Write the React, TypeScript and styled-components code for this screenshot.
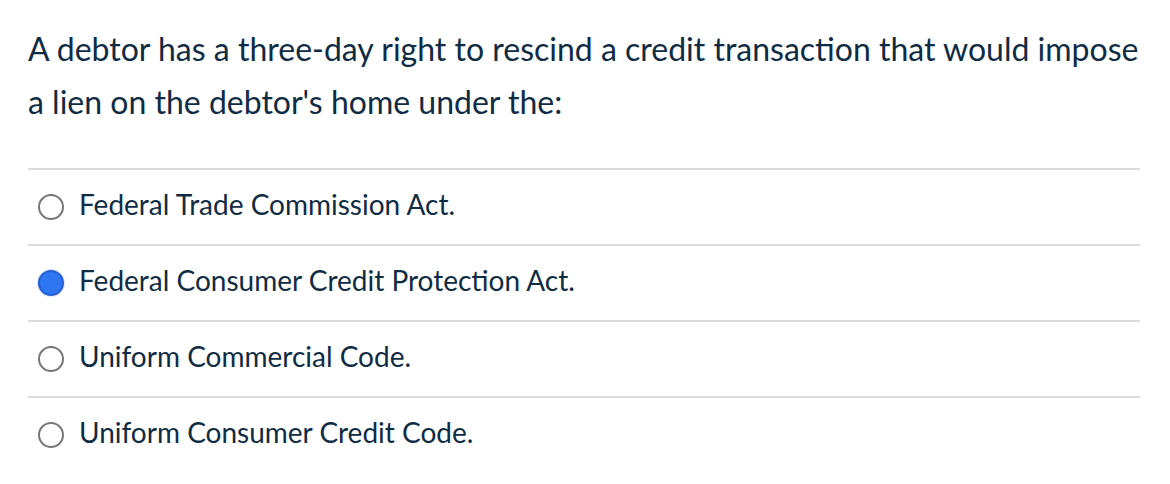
import styled, { createGlobalStyle } from "styled-components";

const GlobalStyle = createGlobalStyle`
  body {
    margin: 0;
    background: #ffffff;
    font-family: Lato, "Liberation Sans", sans-serif;
    color: #102c44;
  }
`;

const Container = styled.div`
  padding: 22px 30px 0 28px;
`;
const Question = styled.p`
  margin: 0;
  font-size: 32px;
  line-height: 53px;
`;
const Answers = styled.div`
  margin-top: 40px;
`;
const Answer = styled.label`
  display: flex;
  align-items: center;
  height: 74px;
  border-top: 2px solid #dcdcdc;
  padding-left: 10px;
  font-size: 28px;
  cursor: pointer;
`;
const AnswerText = styled.span`
  margin-bottom: 6px;
`;
const Radio = styled.span<{ checked: boolean }>`
  box-sizing: border-box;
  width: 26px;
  height: 26px;
  border-radius: 50%;
  margin-right: 15px;
  flex-shrink: 0;
  border: 2px solid ${(props) => (props.checked ? "#2461d6" : "#777777")};
  background: ${(props) => (props.checked ? "#2f76f2" : "#ffffff")};
  box-shadow: ${(props) => (props.checked ? "0 0 0 1px #dfe6f7" : "none")};
`;

const answers = [
  { id: "a", text: "Federal Trade Commission Act.", checked: false },
  { id: "b", text: "Federal Consumer Credit Protection Act.", checked: true },
  { id: "c", text: "Uniform Commercial Code.", checked: false },
  { id: "d", text: "Uniform Consumer Credit Code.", checked: false },
];

function App() {
  return (
    <Container>
      <GlobalStyle />
      <Question>
        A debtor has a three-day right to rescind a credit transaction that
        would impose a lien on the debtor's home under the:
      </Question>
      <Answers>
        {answers.map((answer) => (
          <Answer key={answer.id}>
            <Radio checked={answer.checked} />
            <AnswerText>{answer.text}</AnswerText>
          </Answer>
        ))}
      </Answers>
    </Container>
  );
}
export default App;
